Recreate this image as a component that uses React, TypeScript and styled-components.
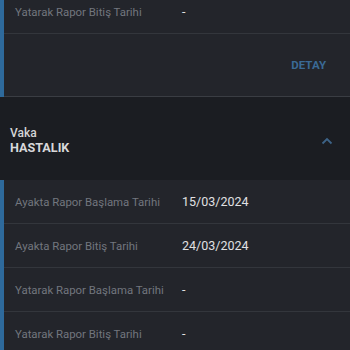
import React from "react";
import styled, { createGlobalStyle } from "styled-components";

const GlobalStyle = createGlobalStyle`
  html, body {
    margin: 0;
    padding: 0;
    background: #1b1d22;
    font-family: Roboto, "Noto Sans", "Liberation Sans", sans-serif;
    overflow: hidden;
  }
`;

const Page = styled.div`
  width: 350px;
  margin-top: -10px;
`;

const Card = styled.div`
  background: #23252b;
  border-left: 4px solid #2e6a9c;
`;

const Row = styled.div`
  display: grid;
  grid-template-columns: 167px 1fr;
  align-items: center;
  height: 43px;
  padding-left: 11px;
  border-bottom: 1px solid #33363c;
`;

const Label = styled.span`
  font-size: 11.4px;
  color: #72767e;
  white-space: nowrap;
`;

const Value = styled.span`
  font-size: 12.5px;
  color: #e0e0e2;
`;

const Footer = styled.div`
  display: flex;
  justify-content: flex-end;
  align-items: center;
  height: 62px;
  padding-right: 24px;
  border-bottom: 1px solid #3a3d43;
`;

const DetailBtn = styled.button`
  background: none;
  border: none;
  padding: 0;
  font-family: inherit;
  font-size: 11.5px;
  font-weight: 700;
  color: #3a6a96;
`;

const Header = styled.div`
  display: flex;
  align-items: center;
  justify-content: space-between;
  height: 83px;
  padding: 4px 17px 0 10px;
  box-sizing: border-box;
  background: #1b1d22;
`;

const HeaderText = styled.div`
  display: flex;
  flex-direction: column;
`;

const Caption = styled.span`
  font-size: 12px;
  font-weight: 500;
  color: #d4d4d6;
  line-height: 14px;
`;

const Title = styled.span`
  font-size: 12.6px;
  font-weight: 700;
  color: #d8d8da;
  line-height: 15px;
`;

const Chevron = () => (
  <svg width="12" height="8" viewBox="0 0 12 8">
    <path d="M1.5 6.5 L6 2 L10.5 6.5" fill="none" stroke="#3d6387" strokeWidth="1.8" />
  </svg>
);

type Item = { label: string; value: string };

const prev: Item[] = [{ label: "Yatarak Rapor Bitiş Tarihi", value: "-" }];

const current: Item[] = [
  { label: "Ayakta Rapor Başlama Tarihi", value: "15/03/2024" },
  { label: "Ayakta Rapor Bitiş Tarihi", value: "24/03/2024" },
  { label: "Yatarak Rapor Başlama Tarihi", value: "-" },
  { label: "Yatarak Rapor Bitiş Tarihi", value: "-" },
];

const App = () => (
  <>
    <GlobalStyle />
    <Page>
      <Card>
        {prev.map((r) => (
          <Row key={r.label}>
            <Label>{r.label}</Label>
            <Value>{r.value}</Value>
          </Row>
        ))}
        <Footer>
          <DetailBtn>DETAY</DetailBtn>
        </Footer>
      </Card>
      <Header>
        <HeaderText>
          <Caption>Vaka</Caption>
          <Title>HASTALIK</Title>
        </HeaderText>
        <Chevron />
      </Header>
      <Card>
        {current.map((r) => (
          <Row key={r.label}>
            <Label>{r.label}</Label>
            <Value>{r.value}</Value>
          </Row>
        ))}
      </Card>
    </Page>
  </>
);

export default App;
